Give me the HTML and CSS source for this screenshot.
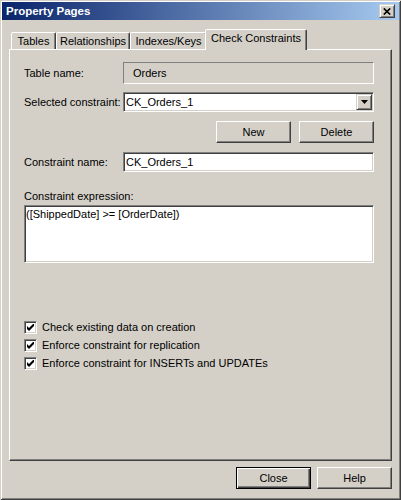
FILE: index.html
```html
<!DOCTYPE html>
<html>
<head>
<meta charset="utf-8">
<link rel="stylesheet" href="styles.css">
</head>
<body>
<div class="window">
  <div class="titlebar">
    <span class="title">Property Pages</span>
    <div class="close-x">
      <svg width="8" height="7" viewBox="0 0 8 7"><path d="M0.8 0.5 L7.2 6.5 M7.2 0.5 L0.8 6.5" stroke="#000" stroke-width="1.7" fill="none"/></svg>
    </div>
  </div>
  <div class="content">
    <div class="tabs">
      <div class="tab tab-tables">Tables</div>
      <div class="tab tab-rel">Relationships</div>
      <div class="tab tab-idx">Indexes/Keys</div>
      <div class="tab tab-check selected">Check Constraints</div>
    </div>
    <div class="panel">
      <div class="row row-table">
        <div class="label">Table name:</div>
        <div class="static">Orders</div>
      </div>
      <div class="row row-field gap8">
        <div class="label">Selected constraint:</div>
        <div class="sunken combo">
          <span class="value">CK_Orders_1</span>
          <div class="dropbtn">
            <svg width="7" height="4" viewBox="0 0 7 4"><path d="M0 0 H7 L3.5 4 Z" fill="#000"/></svg>
          </div>
        </div>
      </div>
      <div class="row row-buttons">
        <div class="btn">New</div>
        <div class="btn">Delete</div>
      </div>
      <div class="row row-field gap9">
        <div class="label">Constraint name:</div>
        <div class="sunken combo"><span class="value">CK_Orders_1</span></div>
      </div>
      <div class="expr-label">Constraint expression:</div>
      <div class="sunken textarea">([ShippedDate] &gt;= [OrderDate])</div>
      <div class="checks">
        <div class="check-row">
          <div class="checkbox"><svg width="7" height="7" viewBox="0 0 7 7"><path d="M0 2 L2 4 L7 -1 L7 2 L2 7 L0 5 Z" fill="#000"/></svg></div>
          <span>Check existing data on creation</span>
        </div>
        <div class="check-row">
          <div class="checkbox"><svg width="7" height="7" viewBox="0 0 7 7"><path d="M0 2 L2 4 L7 -1 L7 2 L2 7 L0 5 Z" fill="#000"/></svg></div>
          <span>Enforce constraint for replication</span>
        </div>
        <div class="check-row">
          <div class="checkbox"><svg width="7" height="7" viewBox="0 0 7 7"><path d="M0 2 L2 4 L7 -1 L7 2 L2 7 L0 5 Z" fill="#000"/></svg></div>
          <span>Enforce constraint for INSERTs and UPDATEs</span>
        </div>
      </div>
    </div>
    <div class="footer">
      <div class="btn btn-default">Close</div>
      <div class="btn">Help</div>
    </div>
  </div>
</div>
</body>
</html>
```
FILE: styles.css
```css
* { box-sizing: border-box; }
html, body { margin: 0; padding: 0; }
body {
  width: 401px;
  height: 500px;
  overflow: hidden;
  background: #D4D0C8;
  font-family: "Liberation Sans", Arial, sans-serif;
  font-size: 11px;
  line-height: 13px;
  color: #000;
}
.window {
  width: 401px;
  height: 500px;
  padding: 2px;
  background: #D4D0C8;
  display: flex;
  flex-direction: column;
  box-shadow: inset 1px 1px #D4D0C8, inset -1px -1px #404040, inset 2px 2px #fff, inset -2px -2px #808080;
}
.titlebar {
  height: 18px;
  flex: none;
  display: flex;
  align-items: center;
  padding-left: 4px;
  background: linear-gradient(to right, #0A246A, #A6CAF0);
}
.title {
  color: #fff;
  font-weight: bold;
  font-size: 11.5px;
  padding-top: 1px;
}
.close-x {
  margin-left: auto;
  margin-right: 4px;
  width: 16px;
  height: 14px;
  background: #D4D0C8;
  border: 1px solid;
  border-color: #D4D0C8 #404040 #404040 #D4D0C8;
  box-shadow: inset 1px 1px #fff, inset -1px -1px #808080;
  display: flex;
  align-items: center;
  justify-content: center;
}
.content {
  flex: 1;
  display: flex;
  flex-direction: column;
  padding-top: 9px;
}
.tabs {
  height: 20px;
  flex: none;
  display: flex;
  align-items: flex-end;
  padding-left: 9px;
}
.tab {
  height: 17px;
  border: 1px solid;
  border-bottom: none;
  border-color: #fff #404040 transparent #fff;
  box-shadow: inset -1px 0 #808080;
  border-top-left-radius: 2px;
  border-top-right-radius: 2px;
  display: flex;
  align-items: center;
  justify-content: center;
  background: #D4D0C8;
  white-space: nowrap;
}
.tab-tables { width: 45px; }
.tab-rel { width: 74px; }
.tab-idx { width: 77px; }
.tab-check { width: 98px; }
.tab.selected {
  height: 21px;
  width: 102px;
  margin: 0 -2px -1px -2px;
  position: relative;
  z-index: 1;
  align-items: flex-start;
  padding-top: 2px;
}
.panel {
  flex: 1;
  margin: 0 7px;
  border: 1px solid;
  border-color: #fff #404040 #404040 #fff;
  box-shadow: inset -1px -1px #808080;
  padding: 12px 17px 0 14px;
  display: flex;
  flex-direction: column;
}
.row {
  display: flex;
  align-items: center;
}
.row-table { height: 22px; }
.row-field { height: 20px; }
.gap8 { margin-top: 8px; }
.gap9 { margin-top: 9px; }
.label {
  width: 99px;
  flex: none;
  white-space: nowrap;
}
.static {
  flex: 1;
  height: 22px;
  border: 1px solid;
  border-color: #808080 #fff #fff #808080;
  padding-left: 9px;
  display: flex;
  align-items: center;
}
.sunken {
  border: 1px solid;
  border-color: #808080 #fff #fff #808080;
  box-shadow: inset 1px 1px #404040, inset -1px -1px #D4D0C8;
  background: #fff;
}
.combo {
  flex: 1;
  height: 20px;
  display: flex;
  align-items: center;
  padding: 0 1px 0 2px;
}
.value { flex: 1; }
.dropbtn {
  width: 16px;
  height: 16px;
  background: #D4D0C8;
  border: 1px solid;
  border-color: #D4D0C8 #404040 #404040 #D4D0C8;
  box-shadow: inset 1px 1px #fff, inset -1px -1px #808080;
  display: flex;
  align-items: center;
  justify-content: center;
}
.row-buttons {
  margin-top: 9px;
  justify-content: flex-end;
  gap: 8px;
}
.btn {
  width: 75px;
  height: 22px;
  background: #D4D0C8;
  border: 1px solid;
  border-color: #fff #404040 #404040 #fff;
  box-shadow: inset -1px -1px #808080;
  display: flex;
  align-items: center;
  justify-content: center;
}
.btn-default {
  border-color: #000;
  box-shadow: inset 1px 1px #fff, inset -1px -1px #404040, inset -2px -2px #808080;
}
.expr-label {
  margin-top: 18px;
}
.textarea {
  margin-top: 2px;
  height: 58px;
  padding: 2px 0 0 1px;
}
.checks {
  margin-top: 55px;
  display: flex;
  flex-direction: column;
}
.check-row {
  height: 18px;
  display: flex;
  align-items: center;
  gap: 5px;
}
.checkbox {
  width: 13px;
  height: 13px;
  background: #fff;
  border: 1px solid;
  border-color: #808080 #fff #fff #808080;
  box-shadow: inset 1px 1px #404040, inset -1px -1px #D4D0C8;
  display: flex;
  align-items: center;
  justify-content: center;
}
.footer {
  flex: none;
  display: flex;
  justify-content: flex-end;
  gap: 6px;
  padding: 6px 7px 9px;
}
```
